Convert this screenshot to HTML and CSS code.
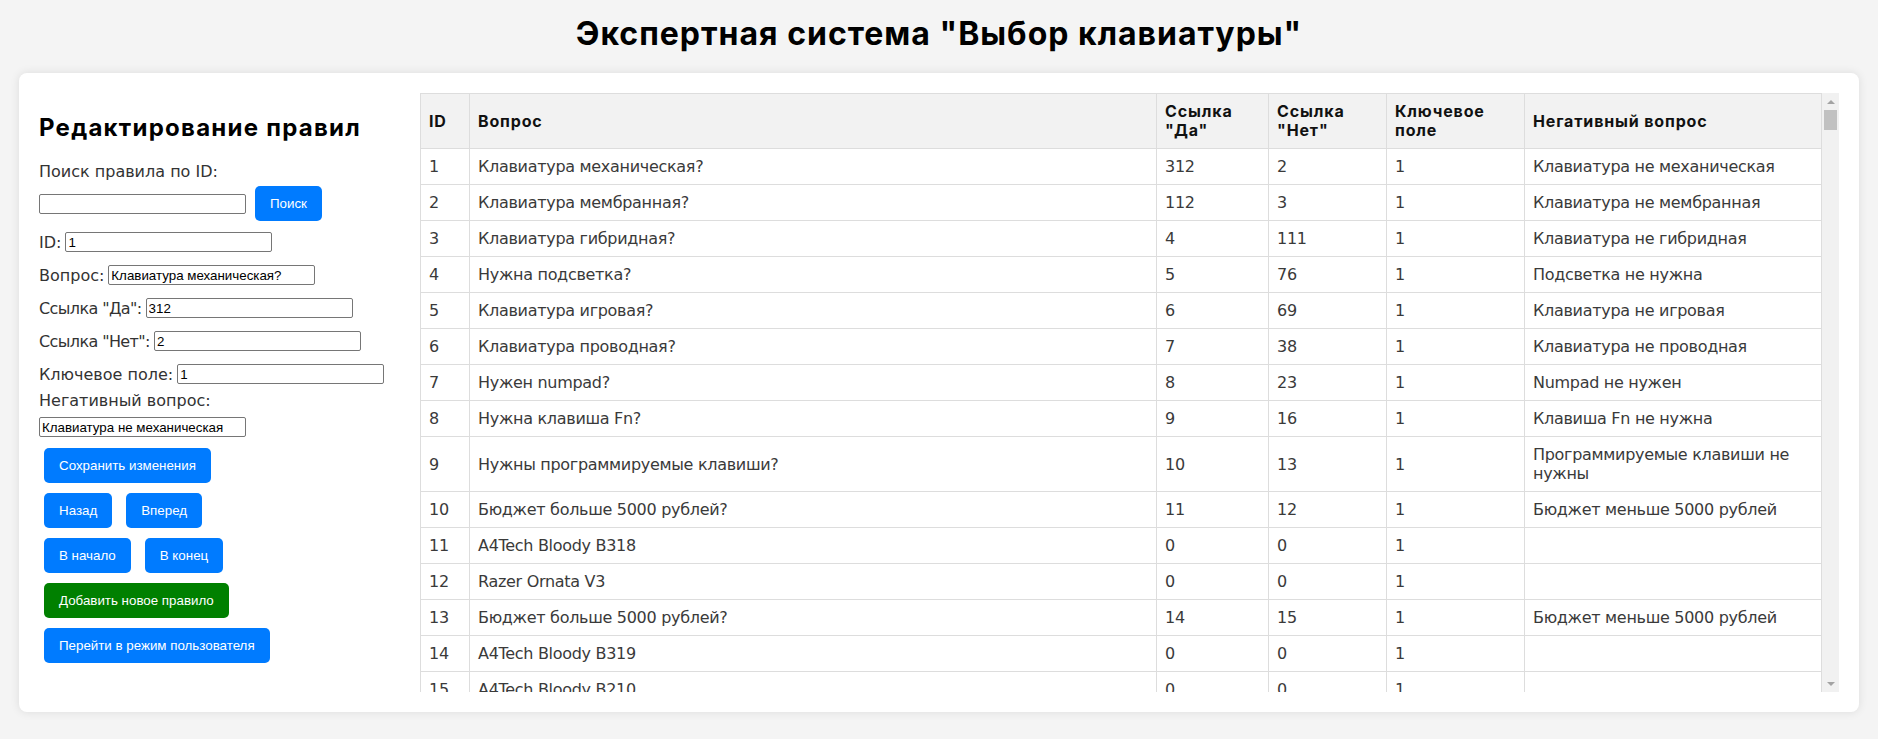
FILE: index.html
```html
<!DOCTYPE html>
<html lang="ru">
<head>
<meta charset="utf-8">
<title>Экспертная система "Выбор клавиатуры"</title>
<link rel="stylesheet" href="styles.css">
</head>
<body>
<h1 class="title">Экспертная система "Выбор клавиатуры"</h1>
<div class="card">
  <div class="editor">
    <h2 class="editor-title">Редактирование правил</h2>
    <label class="search-label" for="search">Поиск правила по ID:</label>
    <div class="search-row">
      <input class="field" id="search" type="text">
      <button class="btn">Поиск</button>
    </div>
    <div class="field-row first"><label for="f-id">ID:</label><input class="field" id="f-id" type="text" value="1"></div>
    <div class="field-row"><label for="f-q">Вопрос:</label><input class="field" id="f-q" type="text" value="Клавиатура механическая?"></div>
    <div class="field-row"><label class="label-tight" for="f-yes">Ссылка "Да":</label><input class="field" id="f-yes" type="text" value="312"></div>
    <div class="field-row"><label class="label-tight" for="f-no">Ссылка "Нет":</label><input class="field" id="f-no" type="text" value="2"></div>
    <div class="field-row"><label for="f-key">Ключевое поле:</label><input class="field" id="f-key" type="text" value="1"></div>
    <label class="neg-label" for="f-neg">Негативный вопрос:</label>
    <input class="field neg-input" id="f-neg" type="text" value="Клавиатура не механическая">
    <div class="buttons">
      <div class="btn-row"><button class="btn">Сохранить изменения</button></div>
      <div class="btn-row"><button class="btn">Назад</button><button class="btn">Вперед</button></div>
      <div class="btn-row"><button class="btn">В начало</button><button class="btn">В конец</button></div>
      <div class="btn-row"><button class="btn btn-green">Добавить новое правило</button></div>
      <div class="btn-row"><button class="btn">Перейти в режим пользователя</button></div>
    </div>
  </div>
  <div class="table-area">
    <div class="table-wrap">
      <table class="rules">
        <colgroup>
          <col class="c-id"><col class="c-q"><col class="c-yes"><col class="c-no"><col class="c-key"><col class="c-neg">
        </colgroup>
        <thead>
          <tr><th>ID</th><th>Вопрос</th><th>Ссылка<br>"Да"</th><th>Ссылка<br>"Нет"</th><th>Ключевое<br>поле</th><th>Негативный вопрос</th></tr>
        </thead>
        <tbody>
          <tr><td>1</td><td>Клавиатура механическая?</td><td>312</td><td>2</td><td>1</td><td>Клавиатура не механическая</td></tr>
          <tr><td>2</td><td>Клавиатура мембранная?</td><td>112</td><td>3</td><td>1</td><td>Клавиатура не мембранная</td></tr>
          <tr><td>3</td><td>Клавиатура гибридная?</td><td>4</td><td>111</td><td>1</td><td>Клавиатура не гибридная</td></tr>
          <tr><td>4</td><td>Нужна подсветка?</td><td>5</td><td>76</td><td>1</td><td>Подсветка не нужна</td></tr>
          <tr><td>5</td><td>Клавиатура игровая?</td><td>6</td><td>69</td><td>1</td><td>Клавиатура не игровая</td></tr>
          <tr><td>6</td><td>Клавиатура проводная?</td><td>7</td><td>38</td><td>1</td><td>Клавиатура не проводная</td></tr>
          <tr><td>7</td><td>Нужен numpad?</td><td>8</td><td>23</td><td>1</td><td>Numpad не нужен</td></tr>
          <tr><td>8</td><td>Нужна клавиша Fn?</td><td>9</td><td>16</td><td>1</td><td>Клавиша Fn не нужна</td></tr>
          <tr><td>9</td><td>Нужны программируемые клавиши?</td><td>10</td><td>13</td><td>1</td><td>Программируемые клавиши не нужны</td></tr>
          <tr><td>10</td><td>Бюджет больше 5000 рублей?</td><td>11</td><td>12</td><td>1</td><td>Бюджет меньше 5000 рублей</td></tr>
          <tr><td>11</td><td>A4Tech Bloody B318</td><td>0</td><td>0</td><td>1</td><td></td></tr>
          <tr><td>12</td><td>Razer Ornata V3</td><td>0</td><td>0</td><td>1</td><td></td></tr>
          <tr><td>13</td><td>Бюджет больше 5000 рублей?</td><td>14</td><td>15</td><td>1</td><td>Бюджет меньше 5000 рублей</td></tr>
          <tr><td>14</td><td>A4Tech Bloody B319</td><td>0</td><td>0</td><td>1</td><td></td></tr>
          <tr><td>15</td><td>A4Tech Bloody B210</td><td>0</td><td>0</td><td>1</td><td></td></tr>
          <tr><td>16</td><td>Бюджет больше 5000 рублей?</td><td>17</td><td>18</td><td>1</td><td>Бюджет меньше 5000 рублей</td></tr>
          <tr><td>17</td><td>Logitech G413</td><td>0</td><td>0</td><td>1</td><td></td></tr>
          <tr><td>18</td><td>Redragon Kumara K552</td><td>0</td><td>0</td><td>1</td><td></td></tr>
          <tr><td>19</td><td>Бюджет больше 5000 рублей?</td><td>20</td><td>21</td><td>1</td><td>Бюджет меньше 5000 рублей</td></tr>
          <tr><td>20</td><td>HyperX Alloy Origins</td><td>0</td><td>0</td><td>1</td><td></td></tr>
          <tr><td>21</td><td>Defender Blade GK-104</td><td>0</td><td>0</td><td>1</td><td></td></tr>
        </tbody>
      </table>
    </div>
    <div class="scrollbar" aria-hidden="true">
      <span class="sb-arrow"><span class="tri-up"></span></span>
      <span class="sb-thumb"></span>
      <span class="sb-track"></span>
      <span class="sb-arrow"><span class="tri-down"></span></span>
    </div>
  </div>
</div>
</body>
</html>
```
FILE: styles.css
```css
* { box-sizing: border-box; }

body {
  margin: 0;
  padding: 0 19px 26px;
  background: #f4f4f4;
  font-family: "DejaVu Sans", "Noto Sans", sans-serif;
  color: #333;
}

.title {
  margin: 14px 0 19px;
  font-family: Inter, "Noto Sans", sans-serif;
  font-size: 32px;
  line-height: 40px;
  font-weight: 700;
  text-align: center;
  color: #000;
  letter-spacing: 1px;
}

.card {
  display: flex;
  gap: 20px;
  padding: 20px;
  background: #fff;
  border-radius: 8px;
  box-shadow: 0 0 10px rgba(0, 0, 0, 0.1);
}

.editor {
  flex: none;
  width: 361px;
  font-size: 16px;
}

.editor-title {
  margin: 20px 0;
  font-family: Inter, "Noto Sans", sans-serif;
  font-size: 24px;
  line-height: 29px;
  font-weight: 700;
  color: #000;
  letter-spacing: 1.25px;
}

.search-label,
.neg-label {
  display: block;
  line-height: 19px;
  height: 19px;
}

.neg-label {
  margin-top: 7px;
  line-height: 20px;
  height: 20px;
}

.search-row {
  display: flex;
  align-items: center;
  gap: 4px;
}

.field-row {
  display: flex;
  align-items: center;
  gap: 4px;
  height: 20px;
  margin-top: 13px;
}

.field-row.first {
  margin-top: 6px;
}

.label-tight {
  letter-spacing: -0.6px;
}

.field {
  width: 207px;
  height: 20px;
  padding: 1px 2px;
  border: 1px solid #767676;
  border-radius: 2px;
  font-family: "Liberation Sans", Arial, sans-serif;
  font-size: 13.33px;
  letter-spacing: 0;
  color: #000;
  background: #fff;
}

.neg-input {
  display: block;
  margin-top: 6px;
}

.buttons {
  margin-top: 6px;
}

.btn-row {
  display: flex;
  gap: 4px;
}

.btn {
  margin: 5px;
  padding: 10px 15px;
  border: none;
  border-radius: 5px;
  background: #007bff;
  color: #fff;
  font-family: "Liberation Sans", Arial, sans-serif;
  font-size: 13.33px;
  line-height: 15px;
  cursor: pointer;
}

.btn-green {
  background: #008000;
}

.table-area {
  flex: 1;
  min-width: 0;
  display: flex;
  height: 599px;
}

.table-wrap {
  flex: 1;
  min-width: 0;
  overflow: hidden auto;
}

.scrollbar {
  flex: none;
  width: 17px;
  display: flex;
  flex-direction: column;
  background: #f1f1f1;
}

.sb-arrow {
  height: 17px;
  display: flex;
  align-items: center;
  justify-content: center;
}

.tri-up,
.tri-down {
  width: 0;
  height: 0;
  border-left: 4px solid transparent;
  border-right: 4px solid transparent;
}

.tri-up { border-bottom: 4px solid #a3a3a3; }
.tri-down { border-top: 4px solid #a3a3a3; }

.sb-thumb {
  height: 20px;
  margin: 0 2px;
  background: #c1c1c1;
}

.sb-track {
  flex: 1;
}

.rules {
  width: 100%;
  table-layout: fixed;
  border-collapse: collapse;
  font-size: 16px;
  line-height: 19px;
}

.c-id { width: 49px; }
.c-yes { width: 112px; }
.c-no { width: 118px; }
.c-key { width: 138px; }
.c-neg { width: 297px; }

.rules th,
.rules td {
  padding: 8px;
  border: 1px solid #ddd;
  text-align: left;
  vertical-align: middle;
}

.rules th {
  background: #f2f2f2;
  color: #111;
  font-family: Inter, "Noto Sans", sans-serif;
  font-weight: 700;
  letter-spacing: 0.85px;
}

.rules td {
  color: #3a3a3a;
  letter-spacing: -0.3px;
}
```
